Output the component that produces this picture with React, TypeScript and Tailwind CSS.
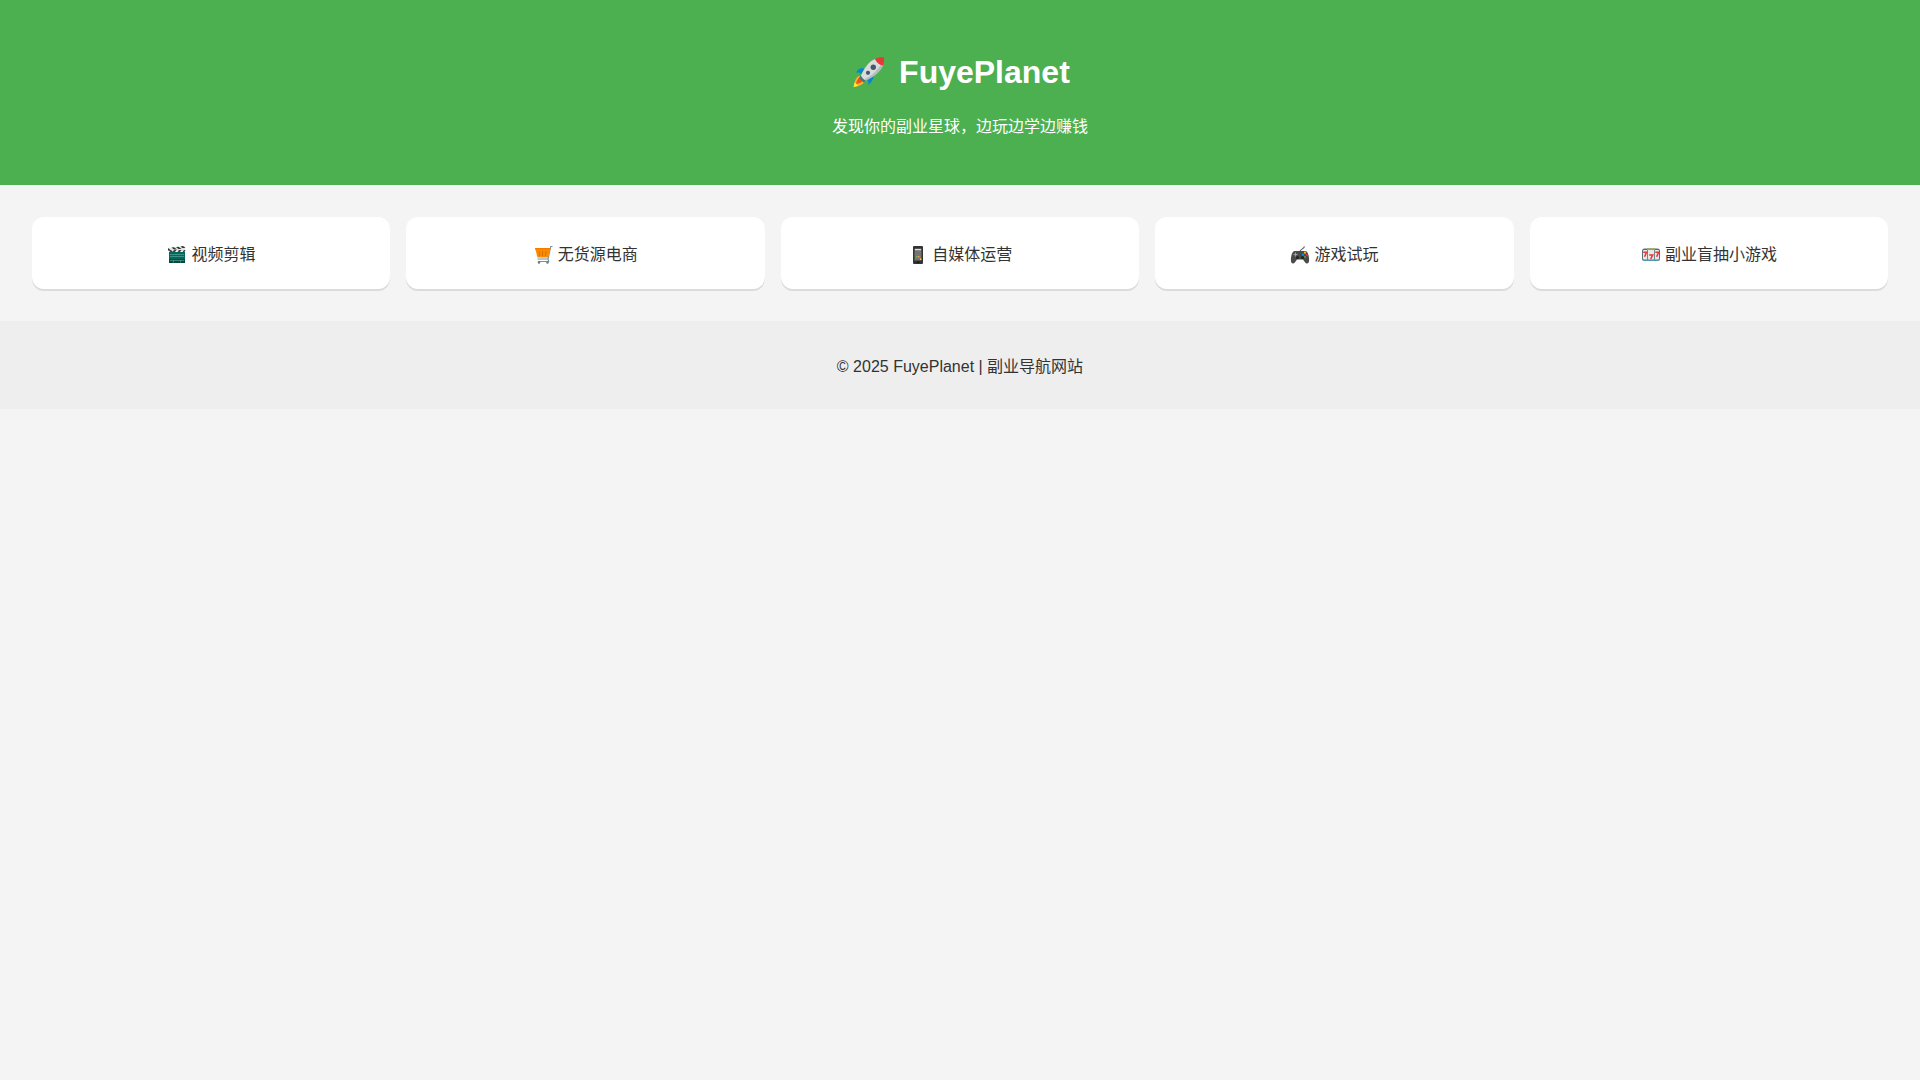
import React from 'react';

const RocketIcon = () => (
  <svg className="inline-block h-9 w-10 align-[-7px]" viewBox="0 0 40 36" aria-hidden="true">
    <path d="M15 15c-4-2-7 0-9 4 2-.8 3.500-.3 5 1z" fill="#0288d1" />
    <path d="M23 20c1 4-.5 8-5 11 1-2.500.5-4-1-5z" fill="#0288d1" />
    <path d="M9.500 22c-3 .5-5 5-6 11 6-.8 10.500-3 11-6z" fill="#fdb52a" />
    <path d="M10 23c-2 1-3.500 4-4 7 3.500-.6 6-1.600 7.500-4z" fill="#f4511e" />
    <path d="M4.800 28.500 3.500 33l4.500-1.200z" fill="#ffeb3b" />
    <path d="m11 21.500 5 5-2.500 2L9 24z" fill="#546e7a" />
    <path d="M25 5c-5 2-10 7-14 16.500 1 2.500 2.500 4 5 5C25 22 31 17 33 11z" fill="#d9dbdd" />
    <path d="M33 11c-2 6-8 11-17 15.500l-1.500-1.200C23 21 28 16 31 10z" fill="#b4babd" />
    <path d="M25 5c3-1.500 6-2 9-1.600.2 3-.2 5.600-1.200 8.100C29.500 11 26.500 8.500 25 5z" fill="#e53935" />
    <circle cx="23.300" cy="13.300" r="2.700" fill="#455a64" />
    <circle cx="18" cy="18.800" r="2.100" fill="#455a64" />
  </svg>
);

const Icon = ({ children }: { children: React.ReactNode }) => (
  <svg className="inline-block size-5 align-[-5px]" viewBox="0 0 20 20" aria-hidden="true">
    {children}
  </svg>
);

const ClapperIcon = () => (
  <Icon>
    <path d="M1 3 18 1v5H1z" fill="#e4e4e4" />
    <path d="m1 3 3 2.500H1zM4.500 2.500 7 2.200l3 2.300H7zM9 2l2.500-.3 3 2.300h-3zM13.500 1.400 16 1.100l2.500 2h-3z" fill="#333" />
    <path d="M2 5h2l2 2H3zM7 5h2.500L8 7H5.500zM12 5h2.500L13 7h-2.500zM17 5h1.500L17.500 7h-2z" fill="#424242" />
    <path d="M2 7h16v11H2z" fill="#00695c" />
    <path d="M2 14h16v4H2z" fill="#004d40" />
    <path d="M3 9.500h14M3 11.500h14M3 15.500h14M6.500 15.500v2M13.500 15.500v2" stroke="#7fb8ae" strokeWidth=".5" />
  </Icon>
);

const CartIcon = () => (
  <Icon>
    <path d="M19.500 1.500h-1.700L15 14H4.500M15 14l.7 2.500H5" fill="none" stroke="#78909c" strokeWidth="1.100" />
    <path d="M2 3h15.500L15 12.500H4.500z" fill="#fb8c00" />
    <path d="M2 3h15.500l-.4 1.500H2.500z" fill="#f57c00" />
    <path d="m6 6 .8 5M9.500 6v5M13 6l-.6 5" stroke="#d87000" strokeWidth="1" />
    <circle cx="6" cy="17.500" r="1.200" fill="#607d8b" />
    <circle cx="14.500" cy="17.500" r="1.200" fill="#607d8b" />
  </Icon>
);

const PhoneIcon = () => (
  <Icon>
    <rect x="5" y="1" width="10" height="18" rx="1" fill="#333" />
    <path d="M6.500 3.500h7v12h-7z" fill="#757575" />
    <path d="M7 4h6v1.200H7z" fill="#e0e0e0" />
    <path d="M8 11h1.500v1.500H8z" fill="#66bb6a" />
    <path d="M10 11h1.500v1.500H10z" fill="#e8a13c" />
    <path d="M11 12.500h1.500V14H11z" fill="#ef5350" />
    <path d="M12 13.500h1.300V15H12z" fill="#fdd835" />
    <path d="M8.500 17.200h3" stroke="#111" />
  </Icon>
);

const GamepadIcon = () => (
  <Icon>
    <path d="M10 7c-.5-3 3.500-2.500 4.500-5.500" fill="none" stroke="#616161" strokeWidth="1.100" />
    <path d="M5 6h10c2.500 0 3.500 3 4 7 .4 4-.5 5.500-2 5.500s-2.500-2-4-4H7c-1.500 2-2.500 4-4 4s-2.400-1.500-2-5.500c.5-4 1.500-7 4-7z" fill="#4a4a4a" />
    <path d="M5.500 7.500v4M3.500 9.500h4" stroke="#9e9e9e" strokeWidth="1.200" />
    <circle cx="7.500" cy="12.500" r="1.500" fill="#222" />
    <circle cx="12.500" cy="12.500" r="1.500" fill="#222" />
    <circle cx="15" cy="7.700" r="1.100" fill="#fbc02d" />
    <circle cx="17" cy="10" r="1.100" fill="#e53935" />
    <circle cx="13" cy="9.700" r="1.100" fill="#039be5" />
    <circle cx="15" cy="12" r="1.100" fill="#43a047" />
  </Icon>
);

const SlotIcon = () => (
  <Icon>
    <rect x="1" y="3.500" width="18" height="12.500" rx="2.500" fill="#546e7a" />
    <path d="M6 3.500h8V5H6z" fill="#a6a131" />
    <path d="M3 14.500h14V16H3z" fill="#4a9ab0" />
    <path d="M2 6c0-.8.5-1 1-1h3.200v9.500H3c-.6 0-1-.4-1-1zM7 5h6v9.500H7zM13.800 5H17c.6 0 1 .4 1 1v7.500c0 .6-.4 1-1 1h-3.200z" fill="#e8e8e8" />
    <path d="M2.200 7.300h3.300l-1.900 4.500M8.200 10h3.500l-2 4M14.300 7.300h3.300l-1.900 4.500" fill="none" stroke="#e53935" strokeWidth="1.600" />
  </Icon>
);

const categories = [
  { icon: <ClapperIcon />, name: '视频剪辑' },
  { icon: <CartIcon />, name: '无货源电商' },
  { icon: <PhoneIcon />, name: '自媒体运营' },
  { icon: <GamepadIcon />, name: '游戏试玩' },
  { icon: <SlotIcon />, name: '副业盲抽小游戏' },
];

export default function App() {
  return (
    <div className="min-h-screen bg-[#f4f4f4] font-['Liberation_Sans','Noto_Sans_CJK_SC',sans-serif] text-base leading-6 text-[#333]">
      <header className="bg-[#4caf50] px-8 pt-12 pb-[46px] text-center text-white">
        <h1 className="mb-[19px] text-[32px] leading-12 font-bold">
          <RocketIcon /> FuyePlanet
        </h1>
        <p>发现你的副业星球，边玩边学边赚钱</p>
      </header>

      <main className="grid grid-cols-1 gap-4 p-8 sm:grid-cols-3 lg:grid-cols-5">
        {categories.map((c) => (
          <a
            key={c.name}
            href="#"
            className="rounded-xl bg-white px-6 pt-[26px] pb-[22px] text-center shadow-[0_2px_0_rgba(0,0,0,0.1)]"
          >
            {c.icon} {c.name}
          </a>
        ))}
      </main>

      <footer className="bg-[#eee] px-8 pt-[34px] pb-[30px] text-center">
        <p>© 2025 FuyePlanet | 副业导航网站</p>
      </footer>
    </div>
  );
}
